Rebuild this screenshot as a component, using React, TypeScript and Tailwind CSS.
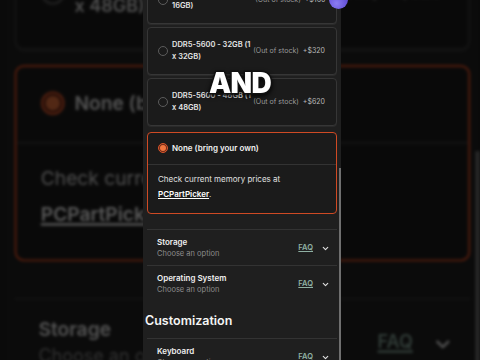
import { ChevronDown } from 'lucide-react';

const options = [
  { top: 'DDR5-5600 - 16GB (1 x', bottom: '16GB)', price: '+$160' },
  { top: 'DDR5-5600 - 32GB (1', bottom: 'x 32GB)', price: '+$320' },
  { top: 'DDR5-5600 - 48GB (1', bottom: 'x 48GB)', price: '+$620' },
];

const rows = [
  { title: 'Storage', sub: 'Choose an option' },
  { title: 'Operating System', sub: 'Choose an option' },
];

const Row = ({ title, sub }: { title: string; sub?: string }) => (
  <div className="mx-[4px] flex items-center border-t border-[#333333] pt-[6px] pb-[5px] pl-[10px] pr-[7px]">
    <div className="whitespace-nowrap leading-[12px]">
      <div className="text-[8px] font-semibold text-[#f0f0f0]">{title}</div>
      {sub ? <div className="text-[7.5px] text-[#8c8c8c]">{sub}</div> : null}
    </div>
    <span className="ml-auto text-[7.5px] font-semibold text-[#8fb0a3] underline underline-offset-1">FAQ</span>
    <ChevronDown size={9} strokeWidth={3} className="ml-[8px] text-[#e0e0e0]" />
  </div>
);

const Screen = () => (
  <div className="relative h-[420px] w-[198px] overflow-hidden bg-[#1f1f1f] font-['Inter','Noto_Sans',sans-serif]">
    <div className="-mt-[24px] flex flex-col gap-[3px] px-[4px]">
      {options.map((o) => (
        <div key={o.price} className="flex h-[48px] items-center whitespace-nowrap rounded-[4px] border border-[#363636] bg-[#1b1b1b] pl-[10px] pr-[11px] shadow-[0_1px_0_#2a2a2a]">
          <span className="h-[10px] w-[10px] shrink-0 rounded-full border border-[#5c5c5c]" />
          <div className="ml-[4px] shrink-0 text-[7.5px] font-semibold leading-[12px] text-[#e4e4e4]">
            <div>{o.top}</div>
            <div>{o.bottom}</div>
          </div>
          <span className="ml-auto shrink-0 text-[7px] text-[#9a9a9a]">(Out of stock)</span>
          <span className="ml-[4px] shrink-0 text-[7px] text-[#b8b8b8]">{o.price}</span>
        </div>
      ))}
      <div className="mt-[3px] rounded-[4px] border-[1.5px] border-[#cf4a24] bg-[#1b1b1b]">
        <div className="flex items-center border-b border-[#333333] pl-[10px] pt-[9px] pb-[10px]">
          <span className="flex h-[10px] w-[10px] items-center justify-center rounded-full border border-[#d9562c] bg-[#6e2a17]">
            <span className="h-[6px] w-[6px] rounded-full bg-[#f0763f]" />
          </span>
          <span className="ml-[4px] text-[8px] font-semibold leading-[12px] text-[#f2f2f2]">None (bring your own)</span>
        </div>
        <div className="px-[10px] pt-[7px] pb-[11px] text-[8px] leading-[15px] text-[#e0e0e0]">
          <div>Check current memory prices at</div>
          <div>
            <span className="font-semibold text-white underline underline-offset-1">PCPartPicker</span>.
          </div>
        </div>
      </div>
    </div>
    <div className="mt-[15px]">
      {rows.map((r) => (
        <Row key={r.title} title={r.title} sub={r.sub} />
      ))}
    </div>
    <div className="mt-[12px] px-[2px] text-[12.5px] font-semibold leading-[16px] text-[#f5f5f5]">Customization</div>
    <div className="mt-[9px]">
      <Row title="Keyboard" sub="Choose an option" />
    </div>
    <div className="absolute right-0 top-[168px] h-[260px] w-[2px] bg-[#6f6f6f]" />
  </div>
);

export default function App() {
  return (
    <div className="relative h-[360px] w-[480px] overflow-hidden bg-[#0a0a0a]">
      <div className="absolute inset-0 blur-[1.5px] brightness-[0.34]">
        <div className="absolute left-[142px] top-0 origin-[98px_180px] scale-[2.4]">
          <Screen />
        </div>
      </div>
      <div className="relative flex h-full justify-center">
        <div className="relative ml-[4px]">
          <Screen />
          <div className="absolute left-[186px] top-[-10px] h-[19px] w-[19px] rounded-full bg-[radial-gradient(circle_at_40%_70%,#8b7cf0,#4a35c9)]" />
        </div>
      </div>
      <div className="absolute left-0 right-0 top-[62px] text-center font-['Inter',sans-serif] text-[28px] font-black tracking-tight text-white [-webkit-text-stroke:3px_#111] [paint-order:stroke_fill] drop-shadow-[0_2px_2px_rgba(0,0,0,0.8)]">
        AND
      </div>
    </div>
  );
}
